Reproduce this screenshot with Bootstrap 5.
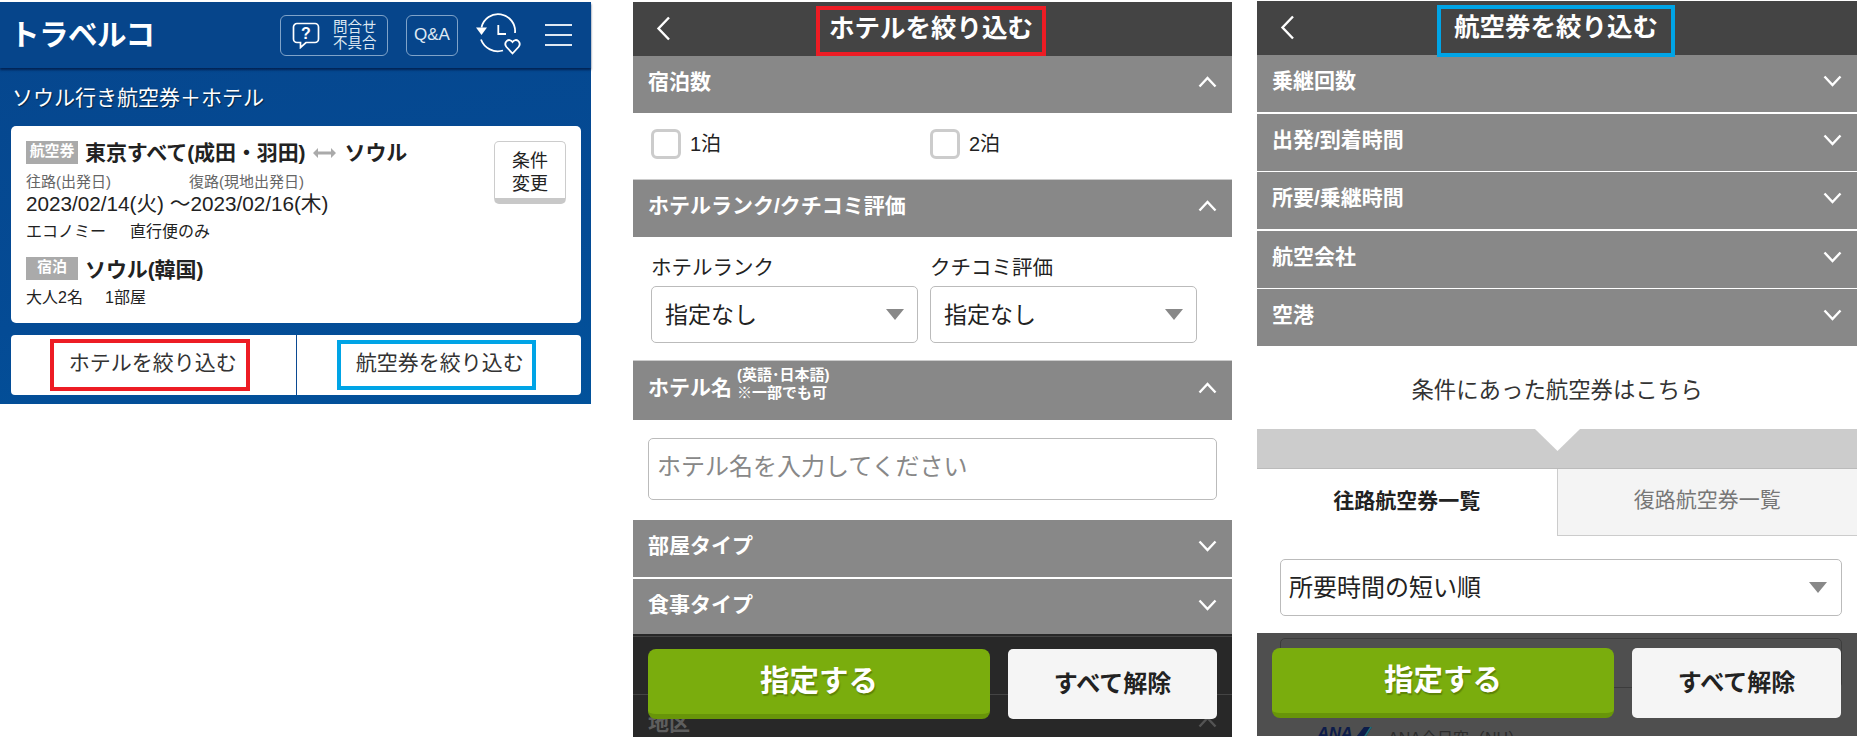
<!DOCTYPE html>
<html lang="ja">
  <head>
    <meta charset="UTF-8" />
    <title>トラベルコ</title>
    <link href="https://cdn.jsdelivr.net/npm/bootstrap@5.3.2/dist/css/bootstrap.min.css" rel="stylesheet" />
    <style>
      body {
        background: #fff;
        color: #222;
        font-family: "Liberation Sans", "Noto Sans CJK JP", sans-serif;
      }
      .tv-page { width: 1857px; height: 739px; overflow: hidden; }

      /* left panel */
      .tv-search { width: 591px; height: 402px; margin-top: 2px; background: linear-gradient(170deg, #06468d, #044b95 65%, #02529b); }
      .tv-top { height: 66px; padding: 0 19px 0 10px; background: #06458b; box-shadow: 0 2px 2px rgba(0, 20, 60, .7); }
      .tv-logo { font-size: 29.5px; font-weight: 700; color: #fff; line-height: 32px; letter-spacing: -.5px; }
      .tv-tool { height: 41px; border: 1px solid #7fa3c9; border-radius: 6px; color: #dfe9f3; }
      .tv-tool-help { width: 108px; padding-left: 11px; gap: 13px; font-size: 14.5px; line-height: 16px; }
      .tv-tool-qa { width: 52px; margin-left: 18px; font-size: 17px; }
      .tv-hist { margin-left: 19px; width: 44px; height: 40px; overflow: visible; }
      .tv-burger { margin-left: 24px; width: 27px; }
      .tv-burger i { display: block; height: 2px; background: #dfe9f3; margin: 8px 0; }
      .tv-dest { height: 58px; padding: 9px 0 0 12px; font-size: 21px; line-height: 42px; color: #fff; text-shadow: 1px 1px 1px rgba(0, 0, 0, .5); }
      .tv-cond { margin: 0 10px 0 11px; height: 197px; padding: 15px; border-radius: 5px; }
      .tv-tag { width: 52px; height: 23px; background: #aaa; color: #fff; font-size: 15px; font-weight: 700; line-height: 20px; text-align: center; margin-right: 7px; flex: none; }
      .tv-route { font-size: 21px; font-weight: 700; line-height: 26px; letter-spacing: -.1px; height: 24px; }
      .tv-dates { font-size: 15px; line-height: 18px; color: #666; margin-top: 8px; }
      .tv-dates span:first-child { width: 163px; }
      .tv-date { font-size: 20.7px; line-height: 24px; margin-top: 1px; }
      .tv-note { font-size: 16px; line-height: 18px; margin-top: 7px; }
      .tv-note span:first-child { width: 104px; }
      .tv-change { width: 72px; height: 63px; padding: 5px 0 0; font-size: 18px; line-height: 23px; color: #222; background: #fff; border: 1px solid #ccc; border-bottom: 6px solid #c8c8c8; border-radius: 5px; flex: none; }
      .tv-change:hover { background: #fff; }
      .tv-refine { margin: 12px 10px 0 11px; height: 60px; border-radius: 4px; }
      .tv-refine > div { flex: 1; }
      .tv-refine > div + div { border-left: 1px solid #0b4a92; }
      .tv-link { font-size: 21px; line-height: 26px; color: #333; white-space: nowrap; }
      .tv-mark-red { border: 4px solid #ed1c24; }
      .tv-mark-blue { border: 4px solid #00a4e6; }
      .tv-refine .tv-mark-red { padding: 7px 0 11px 15px; width: 200px; height: 52px; margin-right: 7px; }
      .tv-refine .tv-mark-blue { padding: 6px 0 10px 15px; width: 199px; height: 50px; margin-right: 5px; }

      /* filter panels */
      .tv-filter { width: 600px; height: 735px; }
      .tv-hotel { margin: 2px 0 0 42px; width: 599px; height: 735px; }
      .tv-air { margin: 1px 0 0 25px; }
      .tv-bar { height: 54px; background: #444; color: #fff; }
      .tv-back { left: 23px; top: 14px; }
      .tv-bar h1 { margin: 4px 0 0; font-size: 25.5px; font-weight: 700; line-height: 32px; color: #fff; white-space: nowrap; }
      .tv-hotel .tv-bar h1 { height: 50px; padding: 2px 9px 8px; margin-right: 3px; }
      .tv-air .tv-bar h1 { height: 52px; padding: 2px 13px 10px; margin-right: 2px; z-index: 1; }
      .tv-sec { height: 57px; background: #888; color: #fff; padding: 0 15px 5px; font-size: 21px; font-weight: 700; line-height: 26px; flex: none; }
      .tv-sec svg { flex: none; }
      .tv-sec-tall { height: 59px; }
      .tv-sec-short { height: 55px; padding-bottom: 3px; }
      .tv-sec-tall small { font-size: 15px; line-height: 18px; font-weight: 700; margin: -8px 0 0 5px; }
      .tv-gap-1 { margin-top: 1px; }
      .tv-gap-2 { margin-top: 2px; }
      .tv-nights { height: 66px; padding: 0 0 4px 18px; border-bottom: 0; }
      .tv-nights + .tv-sec, .tv-ranks + .tv-sec { box-shadow: 0 -1px 0 #ccc; margin-top: 1px; }
      .tv-night { width: 279px; font-size: 20px; }
      .form-check-input.tv-box { width: 30px; height: 30px; margin: 0 9px 0 0; border: 3px solid #ccc; border-radius: 6px; }
      .tv-ranks { height: 123px; padding: 19px 0 0 18px; gap: 12px; }
      .tv-ranks > div { width: 267px; }
      .tv-ranks label { display: block; font-size: 20.5px; line-height: 24px; margin-bottom: 6px; }
      .form-select.tv-pick { height: 57px; font-size: 23px; line-height: 30px; color: #222; padding: 0 36px 0 13px; border: 1px solid #bbb; border-radius: 5px; background-position: right 13px center; background-size: 18px 11px; background-image: url("data:image/svg+xml,%3csvg xmlns='http://www.w3.org/2000/svg' viewBox='0 0 18 11'%3e%3cpath fill='%23888' d='M0 0h18L9 11z'/%3e%3c/svg%3e"); }
      .tv-name { height: 99px; padding: 18px 15px 0; }
      .form-control.tv-input { height: 62px; font-size: 24px; padding: 0 8px 4px; border: 1px solid #bbb; border-radius: 5px; }
      .form-control.tv-input::placeholder { color: #888; }

      /* sticky footer over the list */
      .tv-foot { flex: 1; padding: 15px 15px 0; gap: 18px; overflow: hidden; }
      .tv-foot-hotel { background: #282828; }
      .tv-foot-air { background: #4f4f4f; }
      .tv-ghost-line { left: 0; right: 0; border-top: 1px solid #444; }
      .tv-ghost-box { left: 23px; right: 15px; top: 5px; height: 50px; border: 1px solid #3c3c3c; border-radius: 5px; }
      .tv-ghost-text { left: 15px; top: 76px; font-size: 21px; line-height: 26px; font-weight: 700; color: #5e5e5e; }
      .tv-ghost-chev { right: 15px; top: 82px; }
      .tv-ghost-air { left: 60px; top: 91px; }
      .tv-ana { width: 36px; font-size: 17px; font-weight: 700; font-style: italic; color: #0d1c4a; line-height: 20px; letter-spacing: -.5px; }
      .tv-ana-wing { margin: 3px 16px 0 0; }
      .tv-ana-name { margin-top: 5px; font-size: 16px; line-height: 20px; color: #2c2c2c; }
      .tv-go { width: 342px; height: 70px; background: #7aad0d; border: 0; border-bottom: 5px solid #689509; border-radius: 8px; color: #fff; font-size: 29.5px; font-weight: 700; text-shadow: 1px 2px 1px rgba(60, 80, 0, .45); z-index: 1; flex: none; }
      .tv-go:hover { background: #7aad0d; color: #fff; }
      .tv-clear { width: 209px; height: 70px; background: #f5f5f5; border: 0; border-radius: 5px; color: #222; font-size: 24px; font-weight: 700; z-index: 1; flex: none; }
      .tv-clear:hover { background: #f5f5f5; color: #222; }

      /* air results */
      .tv-found { height: 83px; padding-top: 6px; font-size: 22.4px; color: #333; }
      .tv-band { height: 39px; background: #ccc; }
      .tv-notch { left: 278px; top: 0; width: 45px; height: 22px; }
      .tv-tabs { height: 68px; border-top: 1px solid #bbb; }
      .tv-tabs > div { flex: 1; font-size: 21px; padding-bottom: 4px; }
      .tv-tab-on { font-weight: 700; color: #222; }
      .tv-tab-off { background: #f4f4f4; color: #777; border-left: 1px solid #ccc; border-bottom: 1px solid #ccc; }
      .tv-sort { height: 97px; padding: 23px 15px 0 23px; }
      .tv-sort .form-select.tv-pick { font-size: 24px; padding-left: 8px; background-position: right 14px center; }
    </style>
  </head>
  <body>
    <svg width="0" height="0" class="position-absolute">
      <symbol id="down" viewBox="0 0 19 12"><path d="M1.5 1.5 9.500 10l8-8.500" fill="none" stroke="#fff" stroke-width="2.400" /></symbol>
      <symbol id="up" viewBox="0 0 19 12"><path d="M1.500 10.500 9.500 2l8 8.500" fill="none" stroke="#fff" stroke-width="2.400" /></symbol>
      <symbol id="back" viewBox="0 0 15 25"><path d="M13 1.500 2.500 12.500 13 23.500" fill="none" stroke="#fff" stroke-width="2.400" /></symbol>
    </svg>

    <div class="tv-page d-flex align-items-start">
      <div class="tv-search flex-shrink-0">
        <div class="tv-top d-flex align-items-center">
          <div class="tv-logo">トラベルコ</div>
          <div class="d-flex align-items-center ms-auto">
            <div class="tv-tool tv-tool-help d-flex align-items-center">
              <svg width="28" height="27" viewBox="0 0 28 27">
                <path d="M5 1.500h18a3.500 3.500 0 0 1 3.500 3.500v12a3.500 3.500 0 0 1-3.500 3.500H14L8.500 25.500V20.500H5A3.500 3.500 0 0 1 1.500 17V5A3.500 3.500 0 0 1 5 1.500z" fill="none" stroke="#fff" stroke-width="1.700" />
                <text x="14" y="17" text-anchor="middle" fill="#fff" font-family="Liberation Sans" font-size="16" font-weight="700">?</text>
              </svg>
              <div>問合せ<br />不具合</div>
            </div>
            <div class="tv-tool tv-tool-qa d-flex align-items-center justify-content-center">Q&amp;A</div>
            <svg class="tv-hist" viewBox="0 0 44 40">
              <path d="M4.500 12.500A17 17 0 0 1 38 18" fill="none" stroke="#fff" stroke-width="1.800" />
              <path d="M4 24.500A18 18 0 0 0 26 35.500" fill="none" stroke="#fff" stroke-width="1.800" />
              <path d="M-1 12.500H10L4.500 20z" fill="#fff" />
              <path d="M21.300 10v9H29" fill="none" stroke="#fff" stroke-width="1.800" />
              <path d="M35.500 38.500 29.500 32C26 27.500 32 22 35.500 27 39 22 45 27.500 41.500 32z" fill="#06458b" stroke="#fff" stroke-width="1.800" />
            </svg>
            <div class="tv-burger"><i></i><i></i><i></i></div>
          </div>
        </div>

        <div class="tv-dest">ソウル行き航空券＋ホテル</div>

        <div class="tv-cond bg-white d-flex">
          <div class="flex-grow-1">
            <div class="d-flex tv-route">
              <div class="tv-tag">航空券</div>
              <div class="d-flex align-items-center">
                東京すべて(成田・羽田)
                <svg class="mx-2" width="23" height="10" viewBox="0 0 23 10"><path d="M0 5 5 0v3.500h13V0l5 5-5 5V6.500H5V10z" fill="#aaa" /></svg>
                ソウル
              </div>
            </div>
            <div class="tv-dates d-flex"><span>往路(出発日)</span><span>復路(現地出発日)</span></div>
            <div class="tv-date">2023/02/14(火) ～2023/02/16(木)</div>
            <div class="tv-note d-flex"><span>エコノミー</span><span>直行便のみ</span></div>
            <div class="d-flex tv-route mt-3">
              <div class="tv-tag">宿泊</div>
              <div>ソウル(韓国)</div>
            </div>
            <div class="tv-note d-flex mt-2"><span style="width:79px">大人2名</span><span>1部屋</span></div>
          </div>
          <button type="button" class="btn tv-change">条件<br />変更</button>
        </div>

        <div class="tv-refine bg-white d-flex">
          <div class="d-flex align-items-center justify-content-center"><span class="tv-link tv-mark-red">ホテルを絞り込む</span></div>
          <div class="d-flex align-items-center justify-content-center"><span class="tv-link tv-mark-blue">航空券を絞り込む</span></div>
        </div>
      </div>

      <div class="tv-filter tv-hotel flex-shrink-0 d-flex flex-column">
        <div class="tv-bar position-relative d-flex justify-content-center flex-shrink-0">
          <svg class="tv-back position-absolute" width="15" height="25"><use href="#back" /></svg>
          <h1 class="tv-mark-red">ホテルを絞り込む</h1>
        </div>
        <div class="tv-sec d-flex align-items-center justify-content-between">宿泊数<svg width="19" height="12"><use href="#up" /></svg></div>
        <div class="tv-nights d-flex align-items-center">
          <label class="tv-night d-flex align-items-center"><input class="form-check-input tv-box" type="checkbox" />1泊</label>
          <label class="tv-night d-flex align-items-center"><input class="form-check-input tv-box" type="checkbox" />2泊</label>
        </div>
        <div class="tv-sec d-flex align-items-center justify-content-between">ホテルランク/クチコミ評価<svg width="19" height="12"><use href="#up" /></svg></div>
        <div class="tv-ranks d-flex">
          <div><label>ホテルランク</label><select class="form-select tv-pick"><option>指定なし</option></select></div>
          <div><label>クチコミ評価</label><select class="form-select tv-pick"><option>指定なし</option></select></div>
        </div>
        <div class="tv-sec tv-sec-tall d-flex align-items-center justify-content-between">
          <div class="d-flex align-items-center">ホテル名<small>(英語･日本語)<br />※一部でも可</small></div>
          <svg width="19" height="12"><use href="#up" /></svg>
        </div>
        <div class="tv-name"><input class="form-control tv-input" type="text" placeholder="ホテル名を入力してください" /></div>
        <div class="tv-sec tv-gap-1 d-flex align-items-center justify-content-between">部屋タイプ<svg width="19" height="12"><use href="#down" /></svg></div>
        <div class="tv-sec tv-sec-short tv-gap-2 d-flex align-items-center justify-content-between">食事タイプ<svg width="19" height="12"><use href="#down" /></svg></div>
        <div class="tv-foot tv-foot-hotel position-relative d-flex align-items-start">
          <div class="tv-ghost-line position-absolute" style="top:2px"></div>
          <div class="tv-ghost-line position-absolute" style="top:60px"></div>
          <div class="tv-ghost-text position-absolute">地区</div>
          <svg class="tv-ghost-chev position-absolute" width="19" height="12" opacity=".2"><use href="#up" /></svg>
          <button type="button" class="btn tv-go position-relative">指定する</button>
          <button type="button" class="btn tv-clear position-relative">すべて解除</button>
        </div>
      </div>

      <div class="tv-filter tv-air flex-shrink-0 d-flex flex-column">
        <div class="tv-bar position-relative d-flex justify-content-center flex-shrink-0">
          <svg class="tv-back position-absolute" width="15" height="25"><use href="#back" /></svg>
          <h1 class="tv-mark-blue position-relative">航空券を絞り込む</h1>
        </div>
        <div class="tv-sec d-flex align-items-center justify-content-between">乗継回数<svg width="19" height="12"><use href="#down" /></svg></div>
        <div class="tv-sec tv-gap-2 d-flex align-items-center justify-content-between">出発/到着時間<svg width="19" height="12"><use href="#down" /></svg></div>
        <div class="tv-sec tv-gap-1 d-flex align-items-center justify-content-between">所要/乗継時間<svg width="19" height="12"><use href="#down" /></svg></div>
        <div class="tv-sec tv-gap-2 d-flex align-items-center justify-content-between">航空会社<svg width="19" height="12"><use href="#down" /></svg></div>
        <div class="tv-sec tv-gap-1 d-flex align-items-center justify-content-between">空港<svg width="19" height="12"><use href="#down" /></svg></div>
        <div class="tv-found d-flex align-items-center justify-content-center">条件にあった航空券はこちら</div>
        <div class="tv-band position-relative">
          <svg class="tv-notch position-absolute" viewBox="0 0 45 22"><path d="M0 0h45L22.500 22z" fill="#fff" /></svg>
        </div>
        <div class="tv-tabs d-flex">
          <div class="tv-tab-on d-flex align-items-center justify-content-center">往路航空券一覧</div>
          <div class="tv-tab-off d-flex align-items-center justify-content-center">復路航空券一覧</div>
        </div>
        <div class="tv-sort"><select class="form-select tv-pick"><option>所要時間の短い順</option></select></div>
        <div class="tv-foot tv-foot-air position-relative d-flex align-items-start">
          <div class="tv-ghost-box position-absolute"></div>
          <div class="tv-ghost-air position-absolute d-flex align-items-start">
            <span class="tv-ana">ANA</span>
            <svg class="tv-ana-wing" width="19" height="14" viewBox="0 0 19 14"><path d="M11 0h8L10 14H0z" fill="#0d1c4a" /><path d="M17 0h2L10 14H8z" fill="#1f6f78" /></svg>
            <span class="tv-ana-name">ANA全日空（NH）</span>
          </div>
          <button type="button" class="btn tv-go position-relative">指定する</button>
          <button type="button" class="btn tv-clear position-relative">すべて解除</button>
        </div>
      </div>
    </div>

    <script src="https://cdn.jsdelivr.net/npm/bootstrap@5.3.2/dist/js/bootstrap.bundle.min.js"></script>
  </body>
</html>
